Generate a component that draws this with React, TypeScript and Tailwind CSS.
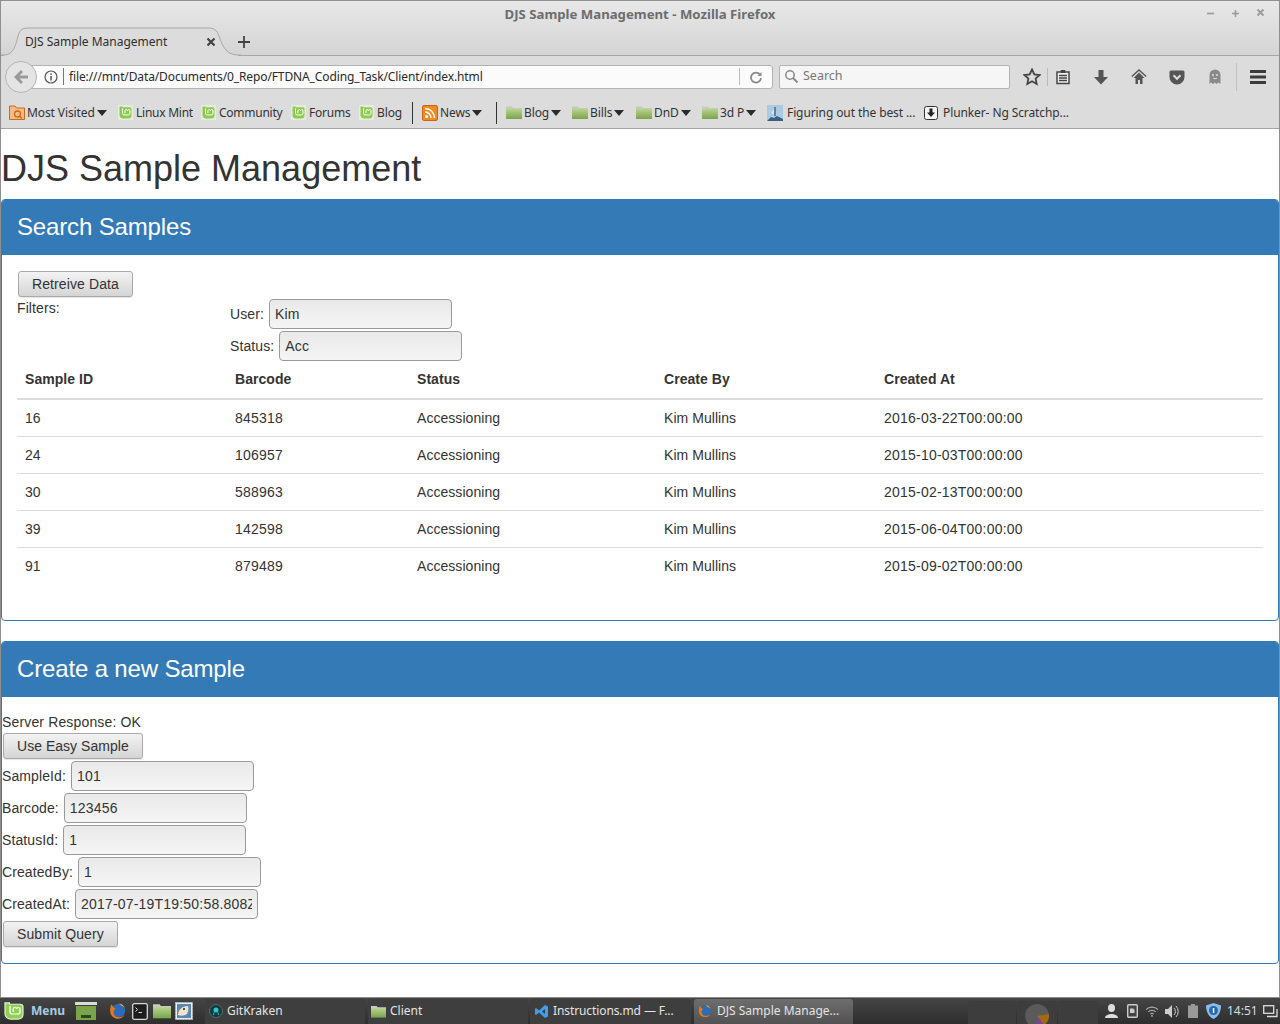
import React from "react";

const ui = "font-['Noto_Sans',sans-serif]";

const MintMark = ({ stroke = "#fff" }: { stroke?: string }) => (
  <path d="M6 4.500v6.500a2.300 2.300 0 0 0 2.300 2.300h5.400a2.300 2.300 0 0 0 2.300-2.300V7.800a1.700 1.700 0 0 0-3.400 0 1.700 1.700 0 0 0-3.400 0V11" fill="none" stroke={stroke} strokeWidth="1.300" />
);
const Mint = () => (
  <svg width="15" height="15" viewBox="0 0 20 20" className="shrink-0">
    <rect width="20" height="20" fill="#e6ece0" />
    <path d="M2 2h4v1h10a2 2 0 0 1 2 2v9a4 4 0 0 1-4 4H7a5 5 0 0 1-5-5z" fill="#8ccb4e" />
    <MintMark />
  </svg>
);
const Folder = ({ w = 16, h = 13 }: { w?: number; h?: number }) => (
  <svg width={w} height={h} viewBox="0 0 16 13" className="shrink-0">
    <defs>
      <linearGradient id="fg" x1="0" y1="0" x2="0" y2="1"><stop offset="0" stopColor="#b7d48e" /><stop offset="1" stopColor="#7ba34c" /></linearGradient>
    </defs>
    <path d="M0 0.500h6l1 1.500h9v2H0z" fill="#c6ccbd" />
    <rect y="3" width="16" height="10" fill="url(#fg)" />
  </svg>
);
const Firefox = ({ s = 16 }: { s?: number }) => (
  <svg width={s} height={s} viewBox="0 0 16 16" className="shrink-0">
    <circle cx="8.500" cy="7.500" r="6" fill="#2b6cb8" />
    <path d="M2 2c-.5 2-1 3.500-1 6a7 7 0 0 0 13.500 2.500c-1 2-3 3-5.500 3-3 0-5-2-5-4.500 0-1.500 1-2.500 2-3-1-.5-2-1-2.500-2C3.500 3 2.500 3 2 2z" fill="#e8761a" />
    <path d="M9 1c2.500.5 4.500 2 5 4.500-.8-1.200-2-2-3-2.200z" fill="#f5a623" />
  </svg>
);
const Caret = () => (
  <svg width="10" height="6" viewBox="0 0 10 6" className="shrink-0"><path d="M0 0h10L5 6z" fill="#2b2b2b" /></svg>
);
const Sep = () => <span className="w-px h-[22px] bg-[#333] shrink-0" />;

const Bm = ({ w, gap = "gap-[2px]", cls = "", children }: { w: number; gap?: string; cls?: string; children: React.ReactNode }) => (
  <div className={`flex items-center ${gap} ${cls} shrink-0`} style={{ width: w }}>{children}</div>
);

const TitleBar = () => (
  <div className="relative h-[27px] flex items-center justify-center text-[13.200px] font-bold text-[#6d6d6d]">
    DJS Sample Management - Mozilla Firefox
    <div className="absolute right-[12px] top-[6px] flex gap-[13px] items-center">
      <svg width="12" height="12" viewBox="0 0 12 12"><path d="M2 6.500h7" stroke="#9a9a9a" strokeWidth="1.600" /></svg>
      <svg width="12" height="12" viewBox="0 0 12 12"><path d="M2 6.500h7M5.500 3v7" stroke="#9a9a9a" strokeWidth="1.600" /></svg>
      <svg width="12" height="12" viewBox="0 0 12 12"><path d="M2.500 2.500l6 6M8.500 2.500l-6 6" stroke="#9a9a9a" strokeWidth="1.800" /></svg>
    </div>
  </div>
);

const TabRow = () => (
  <div className="relative h-[28px] flex items-center border-b border-[#a6a6a6] text-[12px] text-[#2e2e2e]">
    <svg width="240" height="29" viewBox="0 0 240 29" className="absolute left-0 -bottom-px">
      <path d="M3 29V28C13 28 15 17 17 9C19 2 22 1 28 1H207C213 1 216 3 218 9C221 17 224 28 237 28V29z" fill="#dcdcdc" />
      <path d="M0 28H3C13 28 15 17 17 9C19 2 22 1 28 1H207C213 1 216 3 218 9C221 17 224 28 237 28H240" fill="none" stroke="#a8a8a8" />
    </svg>
    <span className="relative ml-[24px] w-[181px]">DJS Sample Management</span>
    <svg width="10" height="10" viewBox="0 0 10 10" className="relative"><path d="M1.500 1.500l7 7M8.500 1.500l-7 7" stroke="#444" strokeWidth="2.200" /></svg>
    <svg width="14" height="14" viewBox="0 0 14 14" className="relative ml-[21px]"><path d="M7 1v12M1 7h12" stroke="#444" strokeWidth="1.800" /></svg>
  </div>
);

const NavRow = () => (
  <div className="relative h-[41px] flex items-center pl-[4px] bg-[#dcdcdc]">
    <div className="relative z-10 w-[32px] h-[32px] rounded-full bg-[#e4e4e4] border border-[#b5b5b5] flex items-center justify-center shrink-0">
      <svg width="16" height="14" viewBox="0 0 16 14"><path d="M8 0L1 7l7 7 2-2-3.500-3.500H15v-3H6.500L10 2z" fill="#9a9a9a" /></svg>
    </div>
    <div className="-ml-[6px] w-[742px] h-[24px] bg-[#fbfbfb] border border-[#b3b3b3] rounded-r-[3px] flex items-center pl-[12px] text-[12px] tracking-[-0.12px] text-[#2a2a2a] shrink-0">
      <svg width="14" height="14" viewBox="0 0 14 14" className="shrink-0"><circle cx="7" cy="7" r="6" fill="none" stroke="#555" strokeWidth="1.200" /><rect x="6.300" y="6" width="1.500" height="4.500" fill="#555" /><rect x="6.300" y="3.400" width="1.500" height="1.500" fill="#555" /></svg>
      <span className="w-px h-[17px] bg-[#777] ml-[5px] mr-[5px]" />
      <span className="flex-1">file:///mnt/Data/Documents/0_Repo/FTDNA_Coding_Task/Client/index.html</span>
      <span className="w-px h-[17px] bg-[#bbb]" />
      <svg width="14" height="14" viewBox="0 0 14 14" className="mx-[9px]"><path d="M11 4.500A5 5 0 1 0 12 8" fill="none" stroke="#8a8a8a" strokeWidth="1.800" /><path d="M12.500 2v4h-4z" fill="#8a8a8a" /></svg>
    </div>
    <div className="ml-[6px] w-[231px] h-[24px] bg-[#f6f6f6] border border-[#b3b3b3] rounded-[2px] flex items-center pl-[4px] text-[12.500px] text-[#777] shrink-0">
      <svg width="15" height="15" viewBox="0 0 15 15" className="mr-[4px]"><circle cx="6" cy="6" r="4.200" fill="none" stroke="#8a8a8a" strokeWidth="1.500" /><path d="M9 9l4.500 4.500" stroke="#8a8a8a" strokeWidth="2" /></svg>
      Search
    </div>
    <svg width="18" height="18" viewBox="0 0 18 18" className="ml-[13px] shrink-0"><path d="M9 1.500l2.300 5 5.200.6-3.900 3.500 1.100 5.400L9 13.300 4.300 16l1.100-5.400L1.500 7.100l5.200-.6z" fill="none" stroke="#444" strokeWidth="1.800" /></svg>
    <span className="w-px h-[18px] bg-[#bbb] ml-[6px] shrink-0" />
    <svg width="16" height="16" viewBox="0 0 16 16" className="ml-[7px] shrink-0"><path d="M2 3h12v11.500H2z" fill="#f0f0f0" stroke="#444" strokeWidth="1.500" /><path d="M6 1.500h4v2H6z" fill="#444" stroke="#444" /><path d="M4 6.500h8M4 9h8M4 11.500h8" stroke="#444" strokeWidth="1.300" /></svg>
    <svg width="16" height="16" viewBox="0 0 16 16" className="ml-[22px] shrink-0"><path d="M5.500 1h5v7H15l-7 7.500L1 8h4.500z" fill="#555" /></svg>
    <svg width="16" height="16" viewBox="0 0 16 16" className="ml-[22px] shrink-0"><path d="M8 3.500L2.500 9H4.500v6H7v-4h2v4h2.500V9h2z" fill="#555" /><path d="M0.800 7.500L8 1l7.200 6.500" fill="none" stroke="#555" strokeWidth="1.400" /></svg>
    <svg width="16" height="16" viewBox="0 0 16 16" className="ml-[22px] shrink-0"><path d="M2 1.500h12a1.500 1.500 0 0 1 1.500 1.500v5a7.500 7.500 0 0 1-15 0V3A1.500 1.500 0 0 1 2 1.500z" fill="#555" /><path d="M4.500 6.300L8 9.800l3.500-3.500" fill="none" stroke="#ddd" strokeWidth="2" /></svg>
    <svg width="14" height="16" viewBox="0 0 14 16" className="ml-[23px] shrink-0"><path d="M1.500 15V6a5.500 5.500 0 0 1 11 0v9l-2-1.500-2 1.500-1.500-1.500L5 15l-2-1.500z" fill="#8a8a8a" /><circle cx="5" cy="6" r="1" fill="#ddd" /><circle cx="9" cy="6" r="1" fill="#ddd" /><path d="M5 9c1 1 3 1 4 0" fill="none" stroke="#ddd" /></svg>
    <span className="w-px h-[28px] bg-[#c2c2c2] ml-[14px] shrink-0" />
    <svg width="16" height="14" viewBox="0 0 16 14" className="ml-[13px] shrink-0"><path d="M0 0h16v3H0zM0 5.500h16v3H0zM0 11h16v3H0z" fill="#3c3c3c" /></svg>
  </div>
);

const BookmarkRow = () => (
  <div className="h-[32px] flex items-center pl-[8px] bg-[#dcdcdc] text-[12px] text-[#333] tracking-[-0.1px] whitespace-nowrap border-b border-[#a6a6a6]">
    <Bm w={109}>
      <svg width="16" height="15" viewBox="0 0 16 15" className="shrink-0"><path d="M.5 1h5.500l1.500 2h8v11.500H.5z" fill="#f3bb85" stroke="#c96a1a" /><circle cx="8.500" cy="9" r="3" fill="none" stroke="#c96a1a" strokeWidth="1.300" /><path d="M10.500 11l2.500 2.500" stroke="#c96a1a" strokeWidth="1.300" /></svg>
      Most Visited<Caret />
    </Bm>
    <Bm w={83} gap="gap-[3px]" cls="tracking-[-0.25px]"><Mint />Linux Mint</Bm>
    <Bm w={90} gap="gap-[3px]" cls="tracking-[-0.25px]"><Mint />Community</Bm>
    <Bm w={68} gap="gap-[3px]" cls="tracking-[-0.2px]"><Mint />Forums</Bm>
    <Bm w={53} gap="gap-[3px]"><Mint />Blog</Bm>
    <Sep />
    <div className="w-[9px] shrink-0" />
    <Bm w={74}>
      <svg width="16" height="16" viewBox="0 0 16 16" className="shrink-0"><rect x=".5" y=".5" width="15" height="15" rx="1.500" fill="#f08a24" stroke="#c8670f" /><circle cx="4.500" cy="11.500" r="1.500" fill="#fff" /><path d="M3 7a6 6 0 0 1 6 6M3 3.500A9.500 9.500 0 0 1 12.500 13" fill="none" stroke="#fff" strokeWidth="1.500" /></svg>
      News<Caret />
    </Bm>
    <Sep />
    <div className="w-[9px] shrink-0" />
    <Bm w={66}><Folder />Blog<Caret /></Bm>
    <Bm w={64}><Folder />Bills<Caret /></Bm>
    <Bm w={66}><Folder />DnD<Caret /></Bm>
    <Bm w={65}><Folder />3d P<Caret /></Bm>
    <Bm w={157} gap="gap-[4px]">
      <svg width="16" height="16" viewBox="0 0 16 16" className="shrink-0"><rect width="16" height="16" fill="#a9cbe6" /><path d="M0 16l4-4 3 1 3-2 6 3v2z" fill="#3d5f7f" /><path d="M7 2h2v9H7z" fill="#6a7f95" /><path d="M4 8l3-4v6z" fill="#d8dfe6" /></svg>
      Figuring out the best ...
    </Bm>
    <Bm w={150} gap="gap-[5px]">
      <svg width="14" height="14" viewBox="0 0 14 14" className="shrink-0"><rect x=".5" y=".5" width="13" height="13" rx="2" fill="#f4f4f4" stroke="#333" /><path d="M5.500 2.500h3v4h2.500L7 11 3 6.500h2.500z" fill="#222" /></svg>
      Plunker- Ng Scratchp...
    </Bm>
  </div>
);

const btn = "h-[26px] px-[13px] rounded-[3px] border border-[#a9a9a9] bg-gradient-to-b from-[#f3f3f3] to-[#d5d5d5] text-[14px] text-[#333] shadow-[0_1px_1px_rgba(0,0,0,0.1)] leading-none";
const input = "h-[30px] rounded-[4px] border border-[#9a9a9a] bg-gradient-to-b from-[#e9e9e9] to-[#f5f5f5] px-[5px] text-[14px] tracking-[0.2px] text-[#333] outline-none";

const Field = ({ label, value }: { label: string; value: string }) => (
  <div className="h-[32px] flex items-center gap-[5px] tracking-[0.1px]">
    <span>{label}</span>
    <input readOnly value={value} className={`${input} w-[183px]`} />
  </div>
);

const rows = [
  ["16", "845318", "2016-03-22T00:00:00"],
  ["24", "106957", "2015-10-03T00:00:00"],
  ["30", "588963", "2015-02-13T00:00:00"],
  ["39", "142598", "2015-06-04T00:00:00"],
  ["91", "879489", "2015-09-02T00:00:00"],
];
const cols = "grid grid-cols-[210px_182px_247px_220px_1fr] px-[8px]";

const Panel = ({ title, mt, h, children }: { title: string; mt: string; h: string; children: React.ReactNode }) => (
  <section className={`${mt} ${h} rounded-[4px] border border-[#337ab7] bg-white`}>
    <div className="h-[55px] bg-[#337ab7] text-white text-[24px] tracking-[-0.15px] flex items-center pl-[15px] pb-[2px] rounded-t-[3px]">{title}</div>
    {children}
  </section>
);

export default function App() {
  return (
    <div className="w-[1280px] h-[1024px] overflow-hidden flex flex-col bg-white">
      <div className="flex-1 min-h-0 flex flex-col border-x border-[#8f8f8f]">
        <header className={`${ui} h-[129px] shrink-0 border-t border-[#8f8f8f]`}>
          <div className="bg-gradient-to-b from-[#e8e8e8] to-[#d4d4d4]">
            <TitleBar />
            <TabRow />
          </div>
          <NavRow />
          <BookmarkRow />
        </header>
        <main className="flex-1 min-h-0 font-['Liberation_Sans',sans-serif] text-[14px] leading-[20px] tracking-[0.05px] text-[#333] overflow-hidden">
          <h1 className="mt-[20px] h-[50px] text-[36px] leading-[40px] tracking-normal font-normal">DJS Sample Management</h1>
          <Panel title="Search Samples" mt="" h="h-[422px]">
            <div className="px-[15px] pt-[16px]">
              <button className={`${btn} tracking-[0.1px] ml-px block`}>Retreive Data</button>
              <div className="flex">
                <div className="w-[213px] pt-px tracking-[0.1px]">Filters:</div>
                <div className="pt-px">
                  <Field label="User:" value="Kim" />
                  <Field label="Status:" value="Acc" />
                </div>
              </div>
              <div className={`${cols} pt-[7px] pb-[9px] font-bold border-b-2 border-[#ddd]`}>
                <span>Sample ID</span><span>Barcode</span><span>Status</span><span>Create By</span><span>Created At</span>
              </div>
              {rows.map((r, i) => (
                <div key={r[0]} className={`${cols} h-[37px] items-center border-b ${i < 4 ? "border-[#ddd]" : "border-transparent"}`}>
                  <span>{r[0]}</span><span className="tracking-[0.2px]">{r[1]}</span><span>Accessioning</span><span>Kim Mullins</span><span className="tracking-[0.22px]">{r[2]}</span>
                </div>
              ))}
            </div>
          </Panel>
          <Panel title="Create a new Sample" mt="mt-[20px]" h="h-[323px]">
            <div className="pt-[15px]">
              <div className="h-[20px] tracking-[0.15px]">Server Response: OK</div>
              <button className={`${btn} tracking-[0.03px] mt-px ml-px block`}>Use Easy Sample</button>
              <div className="h-px" />
              <Field label="SampleId:" value="101" />
              <Field label="Barcode:" value="123456" />
              <Field label="StatusId:" value="1" />
              <Field label="CreatedBy:" value="1" />
              <Field label="CreatedAt:" value="2017-07-19T19:50:58.808Z" />
              <button className={`${btn} tracking-[0.1px] mt-px ml-px block`}>Submit Query</button>
            </div>
          </Panel>
        </main>
      </div>
      <footer className={`${ui} h-[27px] shrink-0 bg-gradient-to-b from-[#454545] to-[#2e2e2e] border-t border-[#8a8a8a] flex items-center text-[12px] text-[#e4e4e4] whitespace-nowrap`}>
        <svg width="20" height="18" viewBox="0 0 20 20" preserveAspectRatio="none" className="ml-[4px] shrink-0">
          <path d="M1 1h4.500v1.500H16a3 3 0 0 1 3 3V14a5 5 0 0 1-5 5H7a6 6 0 0 1-6-6z" fill="#8fcf52" stroke="#e4f3d3" strokeWidth="1.200" />
          <MintMark />
        </svg>
        <span className="ml-[7px] w-[44px] text-[12px] font-bold text-[#a9cbe0]">Menu</span>
        <svg width="22" height="18" viewBox="0 0 22 18" className="shrink-0"><rect width="22" height="3" fill="#d8dcd2" /><rect x="1" y="4" width="20" height="14" fill="#7ba34c" /><rect x="6" y="13" width="10" height="3" fill="#2e4a1a" /></svg>
        <span className="ml-[12px] shrink-0 flex"><Firefox s={18} /></span>
        <svg width="16" height="17" viewBox="0 0 16 17" className="ml-[5px] shrink-0"><rect x=".7" y=".7" width="14.600" height="15.600" rx="1.500" fill="#1d1d1d" stroke="#d8d8d8" strokeWidth="1.300" /><path d="M3.500 4.500l2 2-2 2M6.500 9.500H10" fill="none" stroke="#ddd" /></svg>
        <span className="ml-[5px] shrink-0 flex"><Folder w={18} h={16} /></span>
        <svg width="18" height="18" viewBox="0 0 18 18" className="ml-[4px] shrink-0"><rect x=".5" y=".5" width="17" height="17" fill="#e6edf4" stroke="#bbb" strokeDasharray="2 1" /><rect x="2" y="2" width="14" height="14" fill="#5b86b5" /><path d="M3 13c0-5 4-9 10-9 1 3 0 6-1 8-3 2-6 2-9 1z" fill="#efe3c8" /><circle cx="9" cy="7" r="1" fill="#223" /></svg>
        <div className="ml-[12px] w-[160px] h-[25px] rounded-t-[3px] bg-[#3e3e3e] flex items-center pl-[4px] gap-[4px] shrink-0">
          <svg width="14" height="14" viewBox="0 0 14 14" className="shrink-0"><circle cx="7" cy="7" r="6.500" fill="#0d3c44" stroke="#666" /><circle cx="7" cy="6" r="2.500" fill="#37c3c0" /><path d="M5 8.500L4.500 11M9 8.500l.5 2.500" stroke="#37c3c0" /></svg>
          GitKraken
        </div>
        <div className="ml-[3px] w-[160px] h-[25px] rounded-t-[3px] bg-[#3e3e3e] flex items-center pl-[3px] gap-[4px] shrink-0"><Folder w={15} h={13} />Client</div>
        <div className="ml-[2px] w-[161px] h-[25px] rounded-t-[3px] bg-[#3e3e3e] flex items-center pl-[4px] gap-[4px] tracking-[-0.1px] shrink-0">
          <svg width="15" height="15" viewBox="0 0 15 15" className="shrink-0"><path d="M11 1l3 1.500v10L11 14 5 8.500 2 11l-1-.7v-5.600L2 4l3 2.500zM11 5L8 7.500 11 10z" fill="#3f9fe8" /></svg>
          Instructions.md — F...
        </div>
        <div className="ml-[3px] w-[159px] h-[25px] rounded-t-[3px] bg-gradient-to-b from-[#6e6e6e] to-[#525252] flex items-center pl-[4px] gap-[5px] shrink-0">
          <Firefox s={14} />
          DJS Sample Manage...
        </div>
        <div className="flex-1" />
        <div className="flex items-stretch shrink-0 self-stretch pt-[3px] gap-px">
          <div className="w-[48px] rounded-t-[3px] bg-[#3d3d3d]" />
          <div className="w-[40px] rounded-t-[3px] bg-[#3d3d3d] flex justify-center pt-[3px] overflow-hidden">
            <svg width="24" height="24" viewBox="0 0 24 24" className="shrink-0"><circle cx="12" cy="12" r="12" fill="#5a5a5a" /><path d="M12 12l12-2a12 12 0 0 1-5 11z" fill="#a36a10" /><path d="M12 12l7 9-7 3z" fill="#7a3fa0" /></svg>
          </div>
          <div className="w-[40px] rounded-t-[3px] bg-[#3d3d3d]" />
        </div>
        <div className="flex items-center shrink-0 text-[#d4dde4]">
          <svg width="15" height="14" viewBox="0 0 15 14" className="ml-[6px]"><ellipse cx="7.500" cy="4" rx="3.500" ry="4" fill="#ddd" /><path d="M1 14c0-3 4-4 6.500-4s6.500 1 6.500 4z" fill="#ddd" /></svg>
          <svg width="11" height="14" viewBox="0 0 11 14" className="ml-[8px]"><rect x=".7" y=".7" width="9.600" height="12.600" rx="1" fill="#444" stroke="#ccc" strokeWidth="1.400" /><path d="M3 4.500h3.500l1 1.500v3H3z" fill="#ccc" /></svg>
          <svg width="14" height="11" viewBox="0 0 15 12" className="ml-[7px]"><path d="M1 4a9 9 0 0 1 13 0M3.500 6.500a5.500 5.500 0 0 1 8 0M5.800 8.800a2.500 2.500 0 0 1 3.400 0" fill="none" stroke="#aaa" strokeWidth="1.300" /><circle cx="7.500" cy="10.800" r="1" fill="#aaa" /></svg>
          <svg width="14" height="13" viewBox="0 0 14 13" className="ml-[6px]"><path d="M0 4h3l4-4v13l-4-4H0z" fill="#ccc" /><path d="M9 3a5 5 0 0 1 0 7M11 1a8 8 0 0 1 0 11" fill="none" stroke="#ccc" /></svg>
          <svg width="10" height="14" viewBox="0 0 10 14" className="ml-[9px]"><path d="M3 0h4v1.500h3V14H0V1.500h3z" fill="#999" /></svg>
          <svg width="15" height="16" viewBox="0 0 15 16" className="ml-[8px]"><path d="M7.500 0L15 2.500C15 9 12 14 7.500 16 3 14 0 9 0 2.500z" fill="#8cbde8" /><circle cx="7.500" cy="7.500" r="4.500" fill="#2368b0" /><rect x="6.800" y="5" width="1.500" height="5" fill="#fff" /></svg>
          <span className="ml-[6px] w-[30px]">14:51</span>
          <svg width="15" height="14" viewBox="0 0 15 14" className="ml-[6px] mr-[2px]"><rect x=".7" y="1.700" width="10" height="7.600" fill="none" stroke="#ddd" strokeWidth="1.300" /><path d="M4 12.500h10V5" fill="none" stroke="#ddd" strokeWidth="1.300" /></svg>
        </div>
      </footer>
    </div>
  );
}
